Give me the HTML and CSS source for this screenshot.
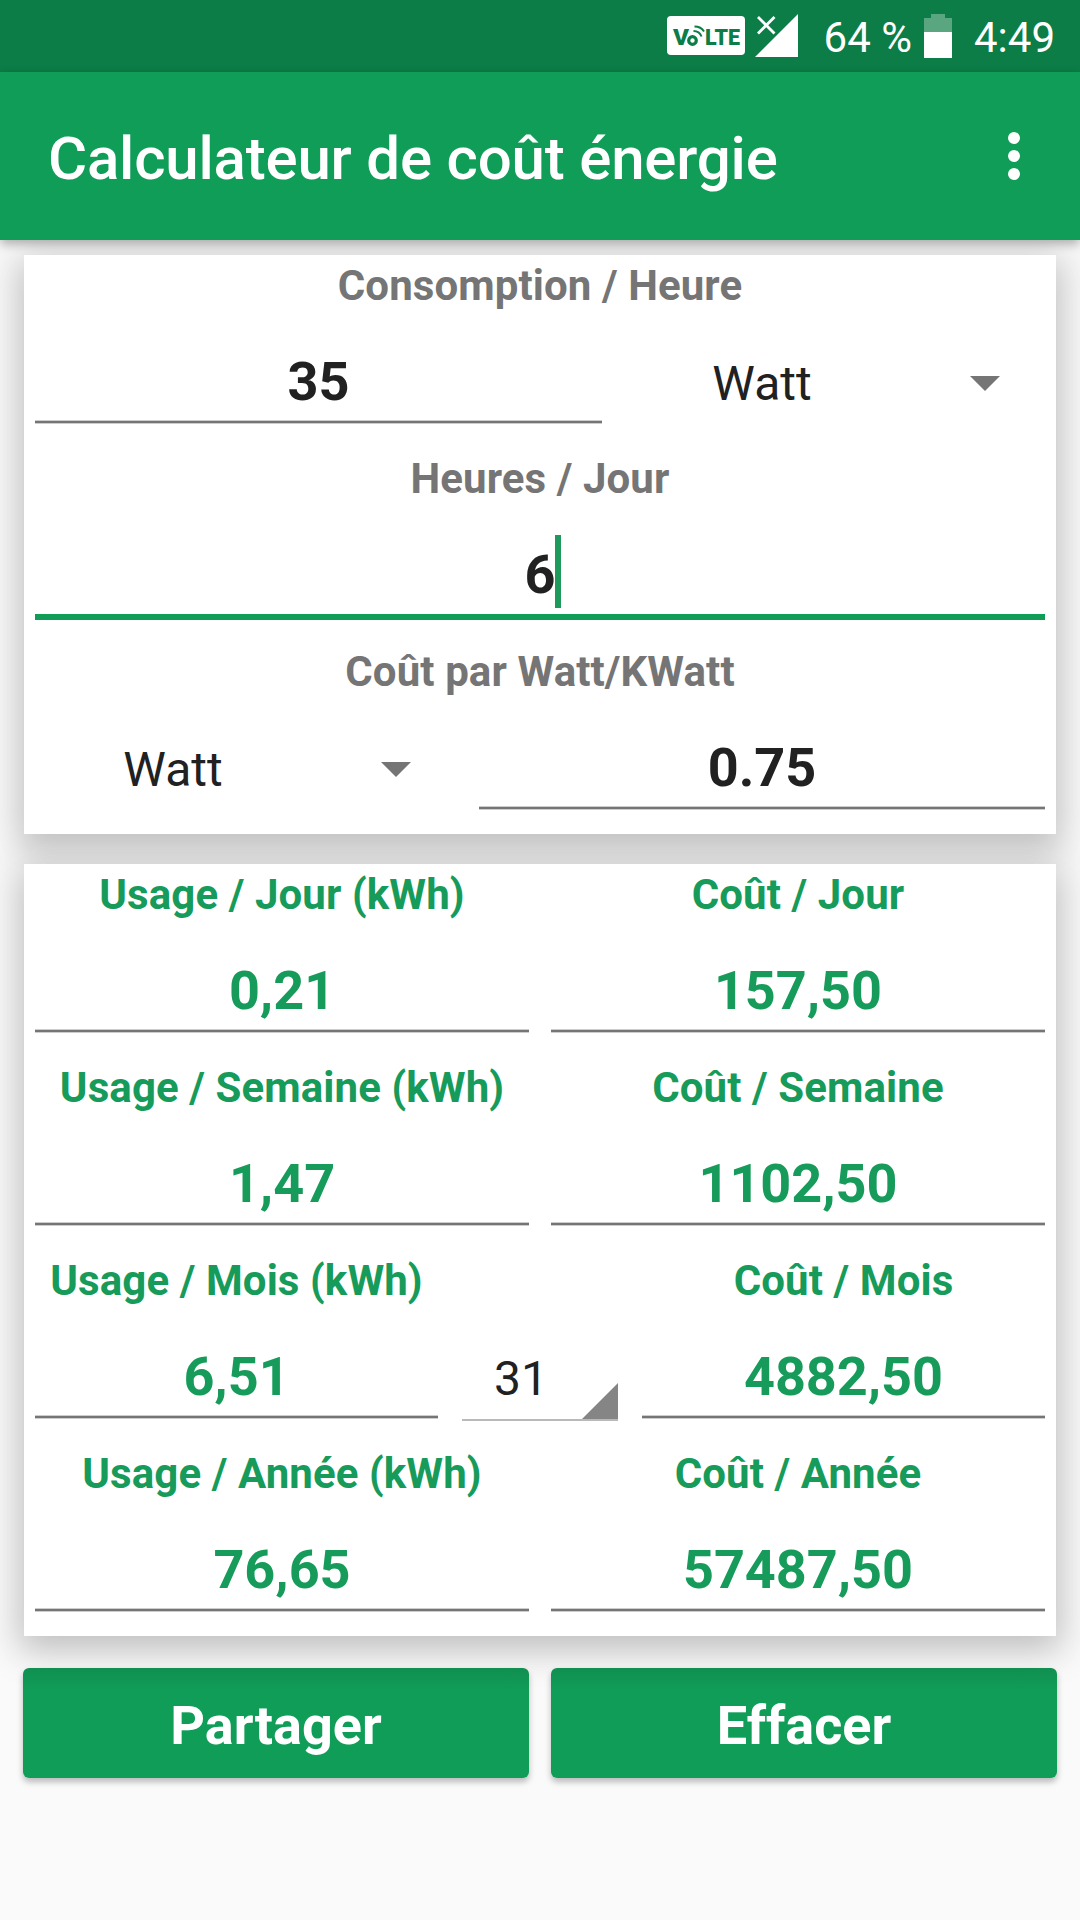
FILE: index.html
```
<!DOCTYPE html>
<html lang="fr">
  <head>
    <meta charset="utf-8">
    <title>Calculateur de coût énergie</title>
    <link rel="stylesheet" href="styles.css">
  </head>
  <body>
    <div class="statusbar">
      <svg class="volte" width="78" height="39" viewBox="0 0 78 39">
        <rect width="78" height="39" rx="4" fill="#fff" />
        <text x="6" y="29" textLength="16" lengthAdjust="spacingAndGlyphs">V</text>
        <circle cx="25.500" cy="24.500" r="3.800" fill="none" stroke="#0c7d46" stroke-width="3.200" />
        <path d="M26.500 15q6 0 8 5.500M27.500 10.500q6.500 0 9.500 5" fill="none" stroke="#0c7d46" stroke-width="2" />
        <text x="38" y="29" textLength="35" lengthAdjust="spacingAndGlyphs">LTE</text>
      </svg>
      <svg class="signal" width="43" height="43" viewBox="0 0 43 43">
        <path d="M43 0v43H0z" fill="#fff" />
        <path d="M3 3l16.500 16.500M19.500 3L3 19.500" stroke="#fff" stroke-width="2.800" />
      </svg>
      <span class="percent">64 %</span>
      <svg class="battery" width="28" height="44" viewBox="0 0 28 44">
        <path d="M7 0h14v4h7v14H0V4h7z" fill="#fff" fill-opacity=".32" />
        <path d="M0 18h28v26H0z" fill="#fff" />
      </svg>
      <span class="clock">4:49</span>
    </div>

    <header class="toolbar">
      <h1>Calculateur de coût énergie</h1>
      <svg width="12" height="48" viewBox="0 0 12 48" fill="#fff">
        <circle cx="6" cy="6" r="6" />
        <circle cx="6" cy="24" r="6" />
        <circle cx="6" cy="42" r="6" />
      </svg>
    </header>

    <main>
      <section class="card">
        <div class="label">Consomption / Heure</div>
        <div class="row">
          <div class="field">35</div>
          <div class="spinner"><span>Watt</span><i class="arrow"></i></div>
        </div>
        <div class="label">Heures / Jour</div>
        <div class="row">
          <div class="field focus"><span class="typed">6<i class="caret"></i></span></div>
        </div>
        <div class="label">Coût par Watt/KWatt</div>
        <div class="row cost">
          <div class="spinner"><span>Watt</span><i class="arrow"></i></div>
          <div class="field">0.75</div>
        </div>
      </section>

      <section class="card results">
        <div class="row">
          <div class="cell"><div class="label">Usage / Jour (kWh)</div><div class="field">0,21</div></div>
          <div class="cell"><div class="label">Coût / Jour</div><div class="field">157,50</div></div>
        </div>
        <div class="row">
          <div class="cell"><div class="label">Usage / Semaine (kWh)</div><div class="field">1,47</div></div>
          <div class="cell"><div class="label">Coût / Semaine</div><div class="field">1102,50</div></div>
        </div>
        <div class="row">
          <div class="cell"><div class="label">Usage / Mois (kWh)</div><div class="field">6,51</div></div>
          <div class="days">
            <span>31</span>
            <svg width="36" height="36" viewBox="0 0 36 36"><path d="M36 0v36H0z" fill="#858585" /></svg>
          </div>
          <div class="cell"><div class="label">Coût / Mois</div><div class="field">4882,50</div></div>
        </div>
        <div class="row">
          <div class="cell"><div class="label">Usage / Année (kWh)</div><div class="field">76,65</div></div>
          <div class="cell"><div class="label">Coût / Année</div><div class="field">57487,50</div></div>
        </div>
      </section>

      <div class="buttons">
        <button>Partager</button>
        <button>Effacer</button>
      </div>
    </main>
  </body>
</html>
```

FILE: styles.css
```
* {
  box-sizing: border-box;
}
body {
  margin: 0;
  height: 1920px;
  overflow: hidden;
  background: #fafafa;
  color: #212121;
  font-family: Roboto, sans-serif;
}

.statusbar {
  display: flex;
  align-items: flex-start;
  justify-content: flex-end;
  height: 72px;
  padding: 14px 25px 0 0;
  background: #0c7d46;
  color: #fff;
  font-size: 42px;
  line-height: 47px;
  white-space: nowrap;
}
.volte {
  margin: 2px 10px 0 0;
}
.volte text {
  font-size: 22px;
  font-weight: 900;
  fill: #0c7d46;
}
.percent {
  margin-left: 26px;
}
.battery {
  margin: 0 22px 0 12px;
}

.toolbar {
  position: relative;
  z-index: 1;
  display: flex;
  align-items: center;
  justify-content: space-between;
  height: 168px;
  padding: 0 60px 0 48px;
  background: #0f9d58;
  color: #fff;
  box-shadow: 0 4px 10px rgba(0, 0, 0, 0.3);
}
.toolbar h1 {
  margin: 6px 0 0;
  font-size: 60px;
  font-weight: 500;
  line-height: 70px;
  letter-spacing: -0.2px;
}

main {
  position: relative;
  z-index: 0;
  padding: 15px 23px 0;
}
.card {
  position: relative;
  margin: 0 1px 30px;
  padding: 0 11px;
  background: #fff;
}
/* shadow sits behind both cards */
.card::before {
  content: "";
  position: absolute;
  inset: 0;
  z-index: -1;
  box-shadow: 0 14px 28px rgba(0, 0, 0, 0.1), 0 6px 36px 10px rgba(0, 0, 0, 0.14);
}
.label {
  color: #757575;
  font-size: 42px;
  font-weight: 700;
  line-height: 61px;
  letter-spacing: 0.1px;
  text-align: center;
  white-space: nowrap;
}
.row {
  display: flex;
  gap: 22px;
}
.row.cost {
  gap: 23px;
}
.field {
  flex: 1;
  height: 107px;
  margin-bottom: 25px;
  padding-top: 34px;
  border-bottom: 2px solid #757575;
  box-shadow: 0 1px #cdcdcd, inset 0 -1px #cdcdcd;
  font-size: 54px;
  font-weight: 700;
  line-height: 63px;
  text-align: center;
}
.field.focus {
  height: 111px;
  margin-bottom: 21px;
  border-bottom: 6px solid #0f9d58;
  box-shadow: none;
}
.typed {
  position: relative;
}
.caret {
  position: absolute;
  left: 100%;
  top: -8px;
  width: 6px;
  height: 73px;
  background: #1f9a5d;
}

.spinner {
  display: flex;
  width: 421px;
  padding-top: 40px;
  font-size: 48px;
  line-height: 56px;
}
.spinner span {
  width: 276px;
  text-align: center;
}
.arrow {
  width: 30px;
  height: 15px;
  margin: 20px 0 0 70px;
  background: #757575;
  clip-path: polygon(0 0, 100% 0, 50% 100%);
}

.results .label,
.results .field {
  color: #169b5a;
}
.cell {
  flex: 1;
}
.days {
  display: flex;
  align-items: flex-end;
  justify-content: space-between;
  width: 156px;
  height: 171px;
  margin: 0 2px;
  border-bottom: 2px solid #b9b9b9;
  font-size: 48px;
  line-height: 56px;
}
.days span {
  margin: 0 0 12px 32px;
}

.buttons {
  display: flex;
  gap: 22px;
  margin-top: 32px;
}
.buttons button {
  flex: 1;
  height: 110px;
  padding: 4px 0 0;
  border: none;
  border-radius: 6px;
  background: linear-gradient(#118f50, #0f9d58 22px);
  box-shadow: 0 4px 6px rgba(0, 0, 0, 0.26);
  color: #fff;
  font-family: inherit;
  font-size: 54px;
  font-weight: 700;
}
```
